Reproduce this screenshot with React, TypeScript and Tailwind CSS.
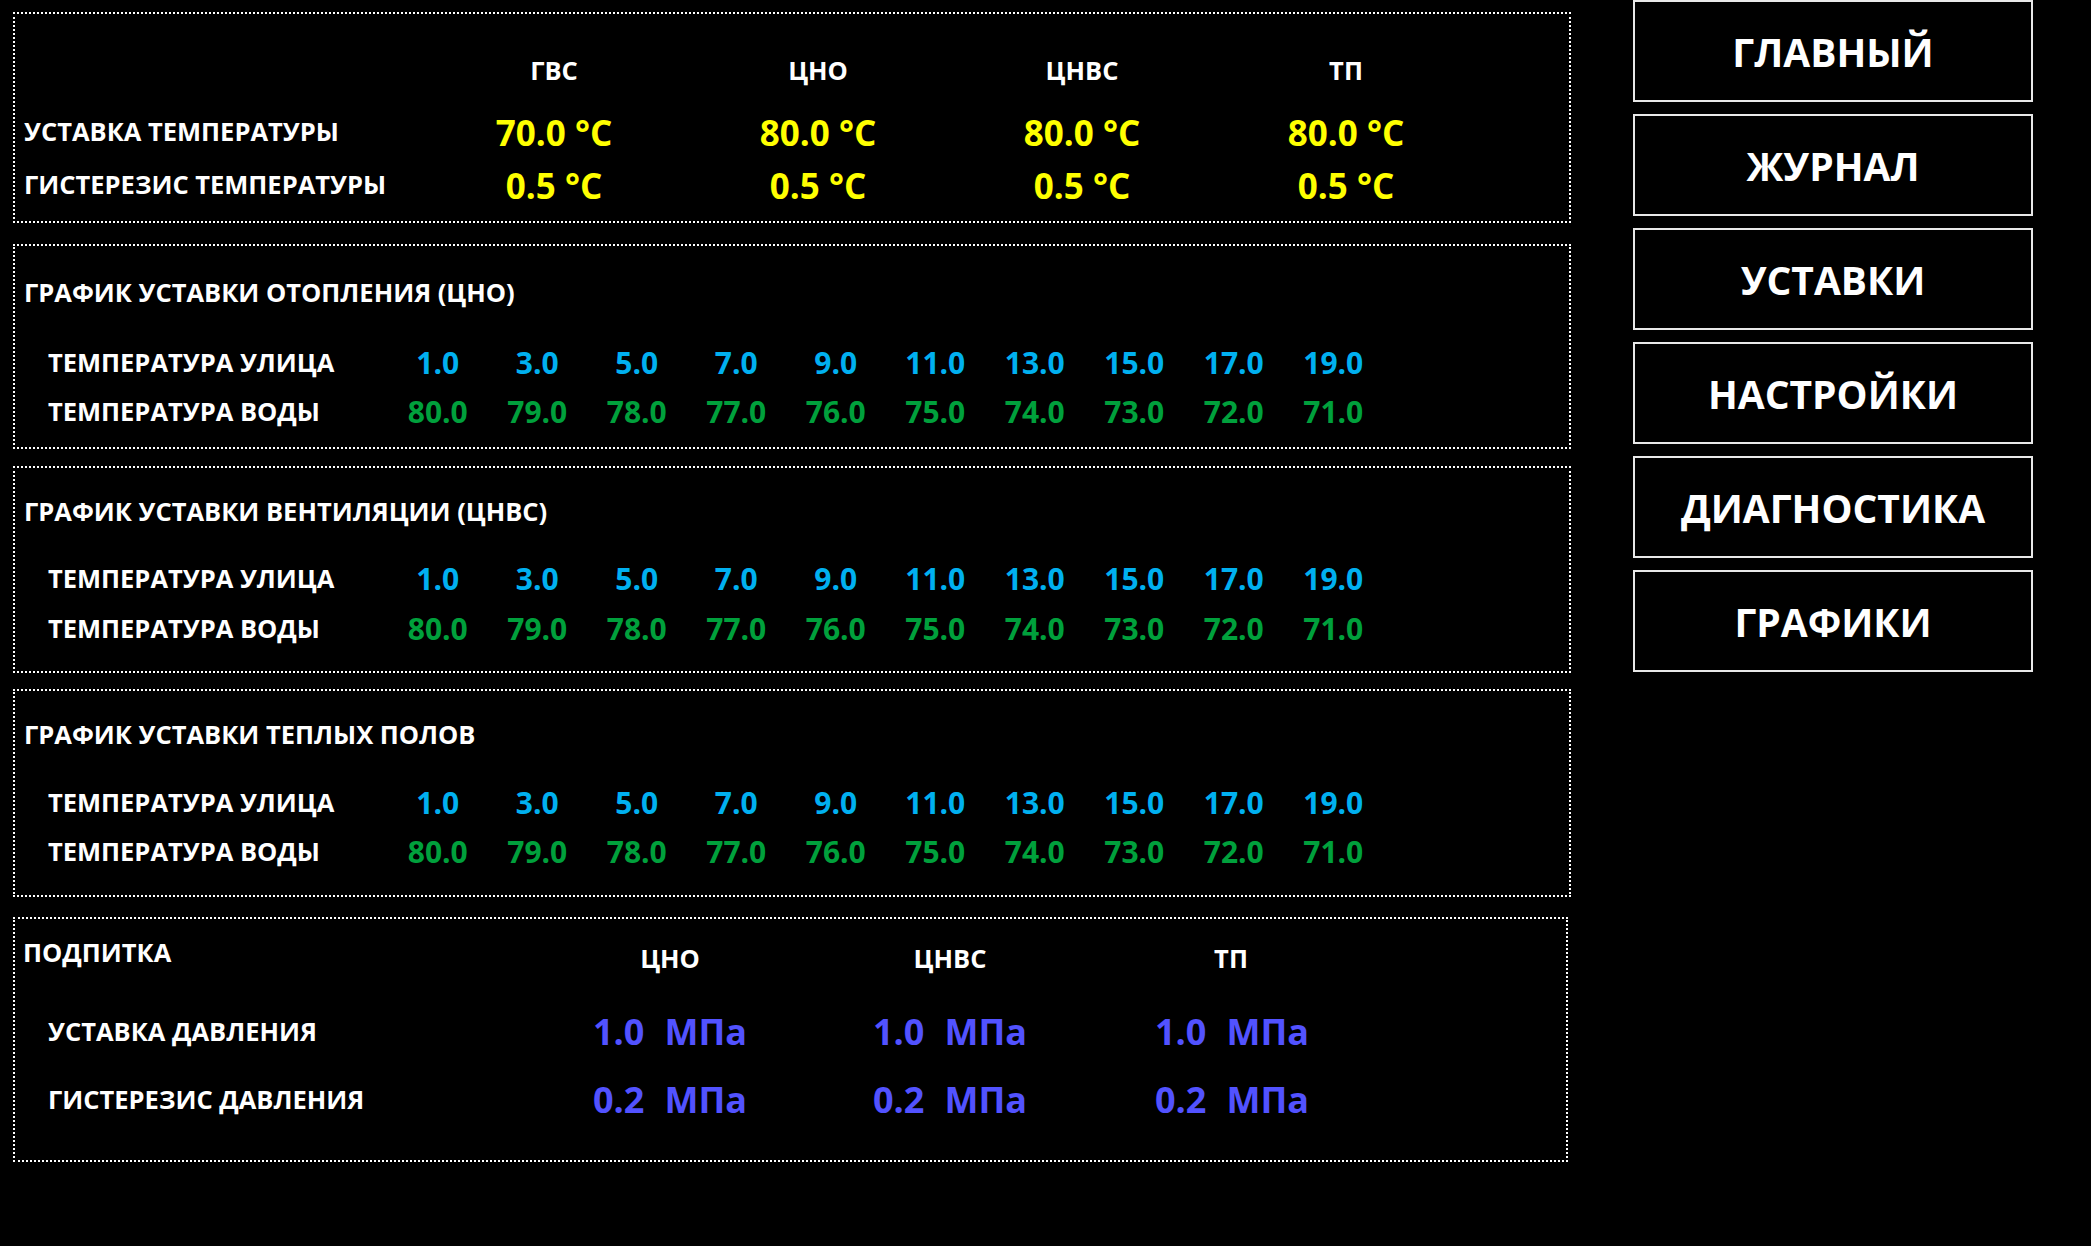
import React from 'react';

const outside = ['1.0', '3.0', '5.0', '7.0', '9.0', '11.0', '13.0', '15.0', '17.0', '19.0'];
const water = ['80.0', '79.0', '78.0', '77.0', '76.0', '75.0', '74.0', '73.0', '72.0', '71.0'];

const navItems = ['ГЛАВНЫЙ', 'ЖУРНАЛ', 'УСТАВКИ', 'НАСТРОЙКИ', 'ДИАГНОСТИКА', 'ГРАФИКИ'];

function ScheduleBox({ title, box, row1, row2 }: {
  title: string;
  box: string;
  row1: string;
  row2: string;
}) {
  return (
    <div className={`border-2 border-dotted border-white ${box}`}>
      <div className="h-[40px] flex items-center pl-[9px] text-[25.5px] font-bold text-white">{title}</div>
      <div className={`grid grid-cols-[340px_repeat(10,99.5px)] items-center h-[40px] pl-[33px] ${row1}`}>
        <span className="text-[25.5px] font-bold text-white whitespace-nowrap">ТЕМПЕРАТУРА УЛИЦА</span>
        {outside.map(v => (
          <span key={v} className="text-center text-[30px] font-bold text-[#00b0f0]">{v}</span>
        ))}
      </div>
      <div className={`grid grid-cols-[340px_repeat(10,99.5px)] items-center h-[40px] pl-[33px] ${row2}`}>
        <span className="text-[25.5px] font-bold text-white whitespace-nowrap">ТЕМПЕРАТУРА ВОДЫ</span>
        {water.map(v => (
          <span key={v} className="text-center text-[30px] font-bold text-[#00a03c]">{v}</span>
        ))}
      </div>
    </div>
  );
}

export default function App() {
  return (
    <div className="min-h-screen w-full bg-black flex font-['Open_Sans','Noto_Sans',sans-serif] leading-none select-none">
      {/* left: setpoints */}
      <div className="w-[1558px] ml-[13px] pt-[12px] flex flex-col">
        <div className="border-2 border-dotted border-white h-[211px] pt-[37px] pl-[9px]">
          <div className="grid grid-cols-[398px_264px_264px_264px_264px] items-center h-[40px]">
            <span />
            {['ГВС', 'ЦНО', 'ЦНВС', 'ТП'].map(h => (
              <span key={h} className="text-center text-[25.5px] font-bold text-white">{h}</span>
            ))}
          </div>
          <div className="grid grid-cols-[398px_264px_264px_264px_264px] items-center h-[40px] mt-[21px]">
            <span className="text-[25.5px] font-bold text-white whitespace-nowrap">УСТАВКА ТЕМПЕРАТУРЫ</span>
            {['70.0', '80.0', '80.0', '80.0'].map((v, i) => (
              <span key={i} className="text-center text-[35px] font-bold text-[#ffff00]">{v} °C</span>
            ))}
          </div>
          <div className="grid grid-cols-[398px_264px_264px_264px_264px] items-center h-[40px] mt-[13px]">
            <span className="text-[25.5px] font-bold text-white whitespace-nowrap">ГИСТЕРЕЗИС ТЕМПЕРАТУРЫ</span>
            {['0.5', '0.5', '0.5', '0.5'].map((v, i) => (
              <span key={i} className="text-center text-[35px] font-bold text-[#ffff00]">{v} °C</span>
            ))}
          </div>
        </div>

        <ScheduleBox
          title="ГРАФИК УСТАВКИ ОТОПЛЕНИЯ (ЦНО)"
          box="mt-[21px] h-[205px] pt-[27px]"
          row1="mt-[30px]"
          row2="mt-[9px]"
        />
        <ScheduleBox
          title="ГРАФИК УСТАВКИ ВЕНТИЛЯЦИИ (ЦНВС)"
          box="mt-[17px] h-[207px] pt-[24px]"
          row1="mt-[27px]"
          row2="mt-[10px]"
        />
        <ScheduleBox
          title="ГРАФИК УСТАВКИ ТЕПЛЫХ ПОЛОВ"
          box="mt-[16px] h-[208px] pt-[24px]"
          row1="mt-[28px]"
          row2="mt-[9px]"
        />

        <div className="border-2 border-dotted border-white w-[1555px] h-[245px] mt-[20px] pt-[14px] pl-[8px]">
          <div className="grid grid-cols-[507px_280px_280px_282px] items-center h-[40px]">
            <span className="text-[25.5px] font-bold text-white">ПОДПИТКА</span>
            {['ЦНО', 'ЦНВС', 'ТП'].map(h => (
              <span key={h} className="text-center text-[25.5px] font-bold text-white mt-[12px]">{h}</span>
            ))}
          </div>
          {[
            { label: 'УСТАВКА ДАВЛЕНИЯ', value: '1.0', mt: 'mt-[39px]' },
            { label: 'ГИСТЕРЕЗИС ДАВЛЕНИЯ', value: '0.2', mt: 'mt-[28px]' },
          ].map(r => (
            <div key={r.label} className={`grid grid-cols-[507px_280px_280px_284px] items-center h-[40px] ${r.mt}`}>
              <span className="pl-[25px] text-[25.5px] font-bold text-white whitespace-nowrap">{r.label}</span>
              {[0, 1, 2].map(i => (
                <span key={i} className="flex justify-center gap-[20px] text-[36px] font-bold text-[#5252ff]">
                  <span>{r.value}</span>
                  <span>МПа</span>
                </span>
              ))}
            </div>
          ))}
        </div>
      </div>

      {/* right: navigation */}
      <div className="ml-[62px] flex flex-col gap-[12px]">
        {navItems.map(n => (
          <button key={n} className="w-[400px] h-[102px] border-2 border-[#e8e8e8] bg-black text-white text-[39px] font-bold flex items-center justify-center">
            {n}
          </button>
        ))}
      </div>
    </div>
  );
}
